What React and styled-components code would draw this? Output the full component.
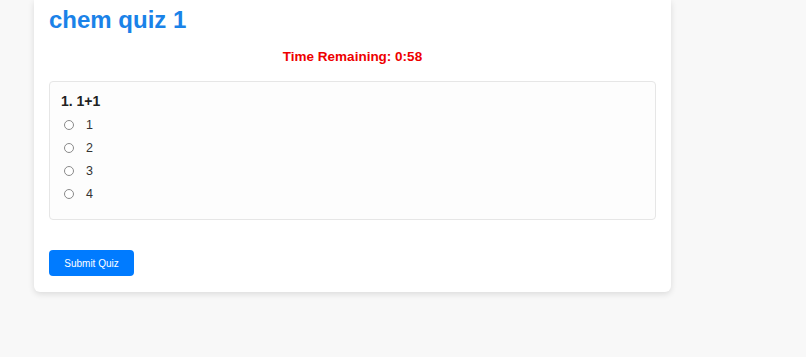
import styled, { createGlobalStyle } from "styled-components";

const GlobalStyle = createGlobalStyle`
  html, body {
    margin: 0;
    padding: 0;
    background-color: #f8f8f8;
    font-family: "Liberation Sans", Arial, sans-serif;
  }
`;

const Page = styled.div`
  padding: 0 135px 0 34px;
  min-height: 357px;
  box-sizing: border-box;
`;

const Card = styled.div`
  background-color: #ffffff;
  border-radius: 0 0 6px 6px;
  box-shadow: 0 2px 6px rgba(0, 0, 0, 0.12);
  padding: 5px 15px 16px;
`;

const Title = styled.h1`
  margin: 0;
  font-size: 24px;
  line-height: 30px;
  font-weight: bold;
  color: #1a82e8;
`;

const Timer = styled.div`
  margin-top: 13px;
  text-align: center;
  font-size: 13.5px;
  line-height: 18px;
  font-weight: bold;
  color: #ee0000;
`;

const QuestionBox = styled.div`
  margin-top: 15px;
  border: 1px solid #e6e6e6;
  border-radius: 4px;
  background-color: #fdfdfd;
  padding: 10px 11px 14px;
`;

const QuestionTitle = styled.h3`
  margin: 0 0 3px;
  font-size: 14px;
  line-height: 18px;
  font-weight: bold;
  color: #222;
`;

const Option = styled.label`
  display: flex;
  align-items: center;
  height: 23px;
  font-size: 12.5px;
  color: #333;
`;

const Radio = styled.input`
  appearance: none;
  box-sizing: border-box;
  width: 10px;
  height: 10px;
  margin: 0 12px 0 3px;
  border: 1px solid #8a8a8a;
  border-radius: 50%;
  background: #fff;
`;

const SubmitButton = styled.button`
  margin-top: 30px;
  width: 85px;
  height: 26px;
  border: none;
  border-radius: 4px;
  background-color: #007bff;
  color: #ffffff;
  font-family: "Liberation Sans", Arial, sans-serif;
  font-size: 10px;
  cursor: pointer;
`;

const options = ["1", "2", "3", "4"];

const App = () => {
  return (
    <>
      <GlobalStyle />
      <Page>
        <Card>
          <Title>chem quiz 1</Title>
          <Timer>Time Remaining: 0:58</Timer>
          <QuestionBox>
            <QuestionTitle>1. 1+1</QuestionTitle>
            {options.map((opt) => (
              <Option key={opt}>
                <Radio type="radio" name="q1" value={opt} />
                {opt}
              </Option>
            ))}
          </QuestionBox>
          <SubmitButton>Submit Quiz</SubmitButton>
        </Card>
      </Page>
    </>
  );
};

export default App;
